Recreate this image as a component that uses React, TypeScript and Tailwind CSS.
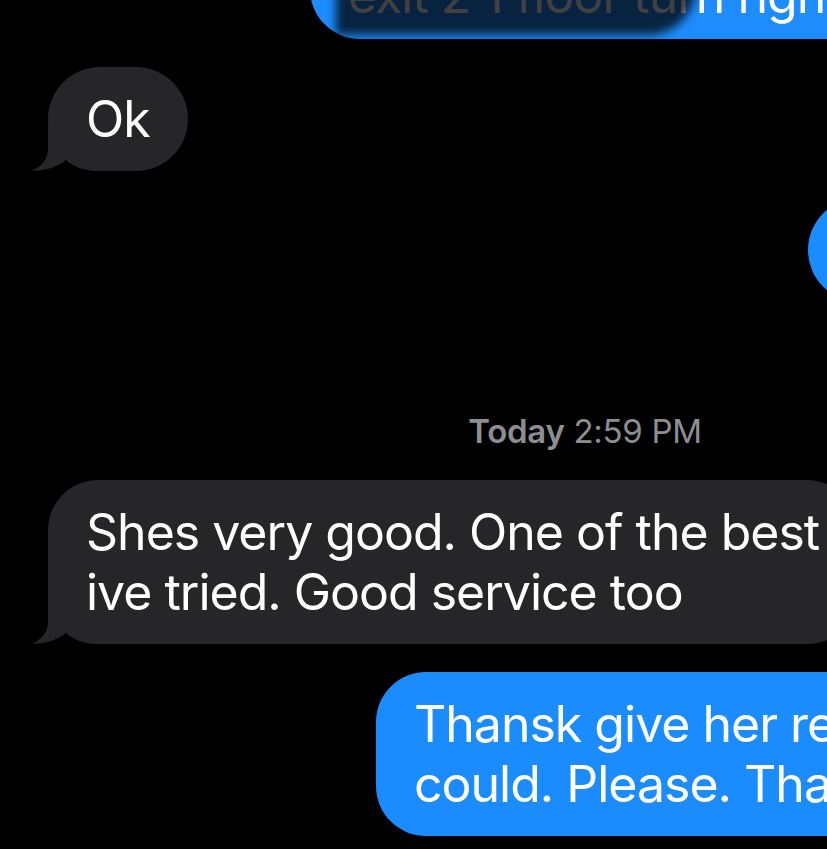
import React from "react";

const font = { fontFamily: "Inter, 'Liberation Sans', sans-serif" };

// little curved tail at the bottom corner of a bubble
const Tail: React.FC<{ color: string; side: "left" | "right" }> = ({ color, side }) => (
  <svg
    className={
      side === "left"
        ? "absolute bottom-0 left-[-16px]"
        : "absolute bottom-0 right-[-16px] -scale-x-100"
    }
    width="78"
    height="48"
    viewBox="-16 -48 78 48"
  >
    <path
      d="M 0 -48 L 0 -22 C 0 -12 -6 -5 -16 0 C -3 0 9 -4 18 -11 C 26 -4 36 0 52 0 L 62 0 L 62 -48 Z"
      fill={color}
    />
  </svg>
);

const App: React.FC = () => {
  return (
    <div className="w-[827px] h-[849px] bg-black overflow-hidden" style={font}>
      <div className="w-[1170px] flex flex-col text-white text-[50px] leading-[60px] tracking-[-1px]">
        {/* top sent bubble, mostly scrolled away */}
        <div className="relative self-end mr-[48px] mt-[-121px] h-[160px] w-[812px] rounded-[50px] bg-[#1d8dfe] flex items-end pl-[38px] pb-[14px]">
          <Tail color="#1d8dfe" side="right" />
          <span className="relative whitespace-nowrap">exit 2 1 floor turn right</span>
          <div className="absolute left-[26px] top-[-60px] bottom-[4px] w-[360px] rounded-br-[48px] bg-black/75 blur-[5px]" />
        </div>

        {/* Ok */}
        <div className="relative self-start ml-[48px] mt-[28px] rounded-[52px] bg-[#262628] px-[38px] py-[22px]">
          <Tail color="#262628" side="left" />
          <span className="relative">Ok</span>
        </div>

        {/* sent, off to the right */}
        <div className="relative self-end mr-[48px] mt-[27px] w-[314px] rounded-[52px] bg-[#1b8cfe] px-[38px] py-[22px] whitespace-nowrap">
          <Tail color="#1b8cfe" side="right" />
          <span className="relative">Thank you</span>
        </div>

        {/* timestamp */}
        <div className="mt-[109px] text-center text-[33px] leading-[40px] tracking-[-0.3px] text-[#8d8d92]">
          <span className="font-semibold">Today</span> 2:59 PM
        </div>

        {/* received */}
        <div className="relative self-start ml-[48px] mt-[29px] rounded-[50px] bg-[#262628] px-[38px] py-[22px] whitespace-nowrap">
          <Tail color="#262628" side="left" />
          <p className="relative">
            Shes very good. One of the best
            <br />
            ive tried. Good service too
          </p>
        </div>

        {/* sent */}
        <div className="relative self-end mr-[48px] mt-[28px] w-[746px] rounded-[50px] bg-[#1b8cfe] px-[38px] py-[22px] whitespace-nowrap">
          <Tail color="#1b8cfe" side="right" />
          <p className="relative">
            Thansk give her referrals if u
            <br />
            could. Please. Thanks
          </p>
        </div>
      </div>
    </div>
  );
};

export default App;
